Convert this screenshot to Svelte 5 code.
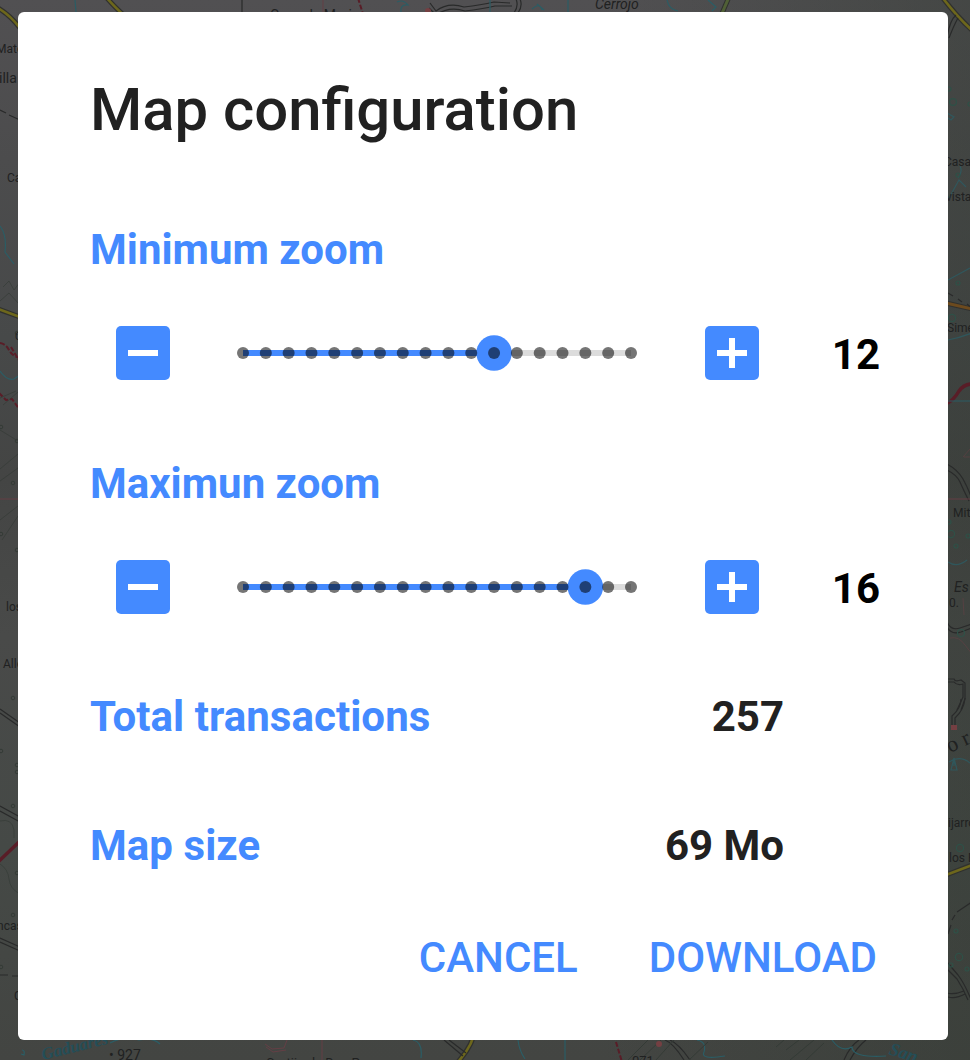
<script>
  const first = 1;
  const last = 18;
  const levels = Array.from({ length: last - first + 1 }, (_, i) => i + first);
  const pitch = 388 / (last - first);
  const at = (level) => 8 + (level - first) * pitch;

  let zooms = $state([
    { label: 'Minimum zoom', value: 12 },
    { label: 'Maximun zoom', value: 16 }
  ]);

  function change(zoom, delta) {
    zoom.value = Math.min(last, Math.max(first, zoom.value + delta));
  }
</script>

<div class="screen">
  <svg class="map" viewBox="0 0 970 1060" fill="none" aria-hidden="true">
    <defs>
      <linearGradient id="land" x1="0" y1="0" x2="0" y2="1">
        <stop offset="0" stop-color="#515052" />
        <stop offset=".15" stop-color="#4c4c4d" />
        <stop offset=".32" stop-color="#474949" />
        <stop offset=".45" stop-color="#444544" />
        <stop offset=".6" stop-color="#494a49" />
        <stop offset=".8" stop-color="#454946" />
        <stop offset="1" stop-color="#434542" />
      </linearGradient>
      <linearGradient id="east" x1="0" y1="0" x2="1" y2="0">
        <stop offset="0" stop-color="#303830" stop-opacity="0" />
        <stop offset="1" stop-color="#303830" stop-opacity=".38" />
      </linearGradient>
    </defs>
    <rect width="970" height="1060" fill="url(#land)" />
    <rect x="600" width="370" height="1060" fill="url(#east)" />

    <g stroke="#30312f" stroke-width="5">
      <path d="M-2 8Q10 15 20 28M106-3Q117 10 134 24M729-3L720 18M942-3Q958 18 974 32" />
      <path d="M-2 309L20 317M946 303L972 309M946 875L972 865M475 1028Q474 1044 458 1062" />
    </g>
    <g stroke="#6d671c" stroke-width="2.6">
      <path d="M-2 8Q10 15 20 28M106-3Q117 10 134 24M942-3Q958 18 974 32" />
      <path d="M-2 309L20 317M946 875L972 865M475 1028Q474 1044 458 1062" />
    </g>
    <path d="M729-3L720 18" stroke="#506036" stroke-width="3" />
    <path d="M946 303L972 309" stroke="#6c4a1e" stroke-width="3" />
    <g stroke="#591d27" stroke-width="3.5">
      <path d="M-2 862L20 841M946 404Q954 400 959 391Q964 384 972 384" />
      <path d="M0 343Q6 344 9 350T20 358M-1 393L6 400L12 399L20 410M11 347L20 362M358-2L363 14M616 1042L622 1062" stroke-width="2" stroke-dasharray="5 2" />
    </g>
    <g stroke="#292a2a" stroke-width="1.2">
      <path d="M0 110L6 113M9 115L20 120M242 0V14M948 293L953 296M958 299L962 302M967 304L972 308" />
      <path d="M0 709L20 723M0 713L20 727M0 806L20 817M0 811L20 822M0 938L20 947M0 942L20 951M0 975H8M12 976H18" />
      <path d="M430 3L436 11Q448 2 464 7Q481 5 494 2L510 3M429 8L436 15Q449 6 465 11Q482 9 495 6L512 6M516-1Q519 6 514 13M520-1Q523 6 518 13" />
      <path d="M947 464Q958 470 963 479T972 499M947 470Q957 475 960 482T969 501M947 622Q951 631 960 628L972 624M947 627Q951 635 961 632L972 628M947 679H954Q955 682 961 680L965 683V699L961 710M947 682H954Q957 686 963 684V697L957 710" />
      <path d="M965 698Q964 710 955 718V725M961 699Q961 708 952 716V725M972 902L957 912M955 915L952 920M951 925L948 934M947 962L958 975Q965 984 972 1002M947 969L957 979Q963 988 968 1000M947 993Q954 995 964 991M948 997Q956 999 965 994" />
      <path d="M665 1040Q673 1043 684 1060M670 1040Q679 1044 690 1060M859 1040Q850 1046 844 1060M866 1040Q857 1047 850 1060M444 1040L463 1056M449 1040L466 1053M947 37Q950 20 956 15M949 38Q954 25 958 18" />
    </g>
    <g stroke="#643f45" stroke-width="1">
      <path d="M0 499H18M947 499H972M322 1040V1060M323 0V12M265 1044L272 1049L284 1048L287 1040M266 1047L273 1052L286 1050" />
      <path d="M963 457L970 449M964 457H972M963 598L964 615M950 638Q959 636 965 645L972 654" stroke-opacity=".6" />
    </g>
    <g stroke="#2b5d65" stroke-width="1.2">
      <path d="M0 371Q7 381 14 379L20 375M0 226Q7 235 5 252L14 264M947 401H972M75 0L76 12M568 0V12M490 0V12M397 2Q403-1 408 5Q400 4 401 12M532 9Q540 2 542 10M537 4L544 10M708 0L716 7L712 11M667 0Q669 10 678 11M518 1040Q519 1050 525 1059M565 1040V1060M697 1040Q707 1042 704 1052Q700 1060 725 1056M832 1040Q841 1053 852 1047Q852 1058 886 1056M413 1040Q423 1042 421 1058" />
      <path d="M947 113L954 117L951 120L948 118M949 198L959 180L966 187M958 178Q963 172 960 166M948 562Q957 568 967 560M949 762Q960 755 970 763M954 766V759M951 770H957L954 758ZM948 340Q959 338 972 333M948 280L970 268" stroke-opacity=".75" />
      <path d="M110 1043Q125 1035 139 1040Q153 1037 160 1044M22 1050Q25 1050 24 1055L21 1054" />
    </g>
    <g stroke="#2f5047" stroke-width="1.2">
      <circle cx="953" cy="102" r="3.4" /><circle cx="949" cy="89" r="2" /><circle cx="970" cy="104" r="2" />
      <circle cx="958" cy="283" r="2" /><circle cx="952" cy="318" r="3.6" /><circle cx="951" cy="534" r="3.6" />
      <circle cx="956" cy="546" r="2" /><circle cx="968" cy="536" r="2" /><circle cx="949" cy="522" r="2" />
      <circle cx="961" cy="633" r="3.5" /><circle cx="960" cy="848" r="3.6" /><circle cx="956" cy="931" r="2" />
      <circle cx="959" cy="957" r="3.7" /><circle cx="967" cy="969" r="2" /><circle cx="951" cy="965" r="2" />
      <circle cx="958" cy="175" r="2" />
    </g>
    <g stroke="#343b36" stroke-width="1">
      {#each [[13, 483], [17, 441], [1, 427], [17, 550], [13, 698], [1, 751], [17, 765], [17, 772], [13, 806], [17, 873], [13, 915], [1, 967], [1, 534], [17, 333]] as [x, y]}
        <circle cx={x} cy={y} r="1.8" />
      {/each}
      <path d="M3 287L9 281L14 290L20 282M0 301L9 293L19 304M0 469L18 454M0 481L18 468M0 520L18 506M2 540L18 516M0 821Q12 818 14 830V838M0 864Q8 869 9 879T20 894M0 430L18 441M0 398L16 391M3 405L18 392" stroke-opacity=".65" />
      <path d="M628 1060L648 1040M640 1060L661 1040M656 1060L674 1040M689 1060L708 1042M776 1047L784 1040M786 1050L799 1040M790 1060L814 1040M806 1060L824 1043" />
    </g>
    <circle cx="428" cy="11" r="3" fill="#743f42" />
    <circle cx="659" cy="1044" r="3" fill="#743f42" />
    <path d="M951 730V725H957V730Z" fill="#743f42" />

    <g class="places">
      <text x="-4" y="53">Mate</text><text x="-1" y="83" font-size="14">illa</text>
      <text x="7" y="182">Ca</text><text x="6" y="611">los</text><text x="3" y="668">Alle</text>
      <text x="-3" y="930">ncas</text><text x="14" y="1000">C</text><text x="15" y="340" font-size="10">C</text>
      <text x="944" y="166">Casa</text><text x="946" y="201">vista</text><text x="947" y="332">Sime</text>
      <text x="953" y="517">Mit</text><text x="949" y="607">0.</text>
      <text x="948" y="827">ijarro</text><text x="949" y="862">los E</text>
      <text x="954" y="592" font-style="italic" font-size="14">Es</text>
      <text x="595" y="9" font-style="italic" font-size="14">Cerrojo</text>
      <text x="270" y="20" font-size="14">Casa de Mari</text>
      <text x="109" y="1060" font-size="14">• 927</text>
      <text x="632" y="1065" font-size="13">071</text>
      <text x="266" y="1067" font-size="13">Cortijo de Don P</text>
      <text x="950" y="753" font-size="22" transform="rotate(-25 950 753)" class="serif">o r</text>
      <text x="43" y="1060" font-size="17" transform="rotate(-14 43 1060)" class="river">Gaduares</text>
      <text x="888" y="1054" font-size="18" transform="rotate(18 888 1054)" class="river">San</text>
    </g>
  </svg>

  <div class="dialog" role="dialog" aria-labelledby="title">
    <h1 id="title">Map configuration</h1>

    {#each zooms as zoom}
      <section class="zoom">
        <h2>{zoom.label}</h2>
        <div class="control">
          <button class="step" aria-label="−" onclick={() => change(zoom, -1)}>
            <svg viewBox="0 0 54 54"><path d="M12 24H42V30H12Z" fill="#fff" /></svg>
          </button>
          <svg class="slider" viewBox="0 0 404 54">
            <path d="M8 27H396" stroke="#dcdcdc" stroke-width="6" />
            <path d="M8 27H{at(zoom.value)}" stroke="#448aff" stroke-width="6" />
            <circle cx={at(zoom.value)} cy="27" r="17.8" fill="#448aff" />
            {#each levels as level}
              <circle cx={at(level)} cy="27" r="6" fill="#000" fill-opacity=".54" />
            {/each}
          </svg>
          <button class="step" aria-label="+" onclick={() => change(zoom, 1)}>
            <svg viewBox="0 0 54 54"><path d="M24 12H30V24H42V30H30V42H24V30H12V24H24Z" fill="#fff" /></svg>
          </button>
          <output>{zoom.value}</output>
        </div>
      </section>
    {/each}

    <dl>
      <div><dt>Total transactions</dt><dd>257</dd></div>
      <div><dt>Map size</dt><dd>69 Mo</dd></div>
    </dl>

    <div class="actions">
      <button>CANCEL</button>
      <button>DOWNLOAD</button>
    </div>
  </div>
</div>

<style>
  :global(body) {
    margin: 0;
  }
  .screen {
    position: relative;
    box-sizing: border-box;
    width: 970px;
    height: 1060px;
    padding: 12px 22px 20px 18px;
    overflow: hidden;
    font-family: Roboto, sans-serif;
  }
  .map {
    position: absolute;
    inset: 0;
    width: 970px;
    height: 1060px;
  }
  .places {
    font-family: Roboto, sans-serif;
    font-size: 12px;
    fill: #202121;
  }
  .places .serif {
    font-family: 'Liberation Serif', serif;
  }
  .places .river {
    font-family: 'Liberation Serif', serif;
    font-style: italic;
    font-weight: 700;
    fill: #244e58;
  }
  .dialog {
    position: relative;
    box-sizing: border-box;
    height: 1028px;
    padding: 63px 72px 0;
    border-radius: 6px;
    background: #fff;
    color: #212121;
  }
  h1, h2, dl, dd {
    margin: 0;
  }
  h1 {
    margin-bottom: 80px;
    font-size: 59.8px;
    line-height: 70px;
    font-weight: 500;
  }
  h2, dt, dd, output {
    font-size: 42px;
    line-height: 50px;
    font-weight: 700;
  }
  h2, dt {
    color: #448aff;
  }
  .zoom {
    height: 234px;
  }
  .control {
    display: flex;
    align-items: center;
    height: 54px;
    margin-top: 51px;
    padding-left: 26px;
  }
  button {
    padding: 0;
    border: 0;
    font: inherit;
    cursor: pointer;
  }
  .step {
    width: 54px;
    height: 54px;
    border-radius: 5px;
    background: #448aff;
  }
  .step svg {
    display: block;
  }
  .slider {
    width: 404px;
    height: 54px;
    margin: 0 66px 0 65px;
    overflow: visible;
  }
  output {
    flex: 1;
    padding-top: 4px;
    text-align: right;
    margin-right: -4px;
    color: #000;
  }
  dl {
    margin-top: -1px;
  }
  dl div {
    display: flex;
    justify-content: space-between;
    height: 129px;
    padding-right: 92px;
  }
  dt {
    letter-spacing: 0.05px;
  }
  .actions {
    display: flex;
    justify-content: flex-end;
    gap: 71px;
    margin: -17px -1px 0 0;
  }
  .actions button {
    background: none;
    color: #448aff;
    font-size: 42px;
    line-height: 50px;
    font-weight: 500;
  }
</style>
